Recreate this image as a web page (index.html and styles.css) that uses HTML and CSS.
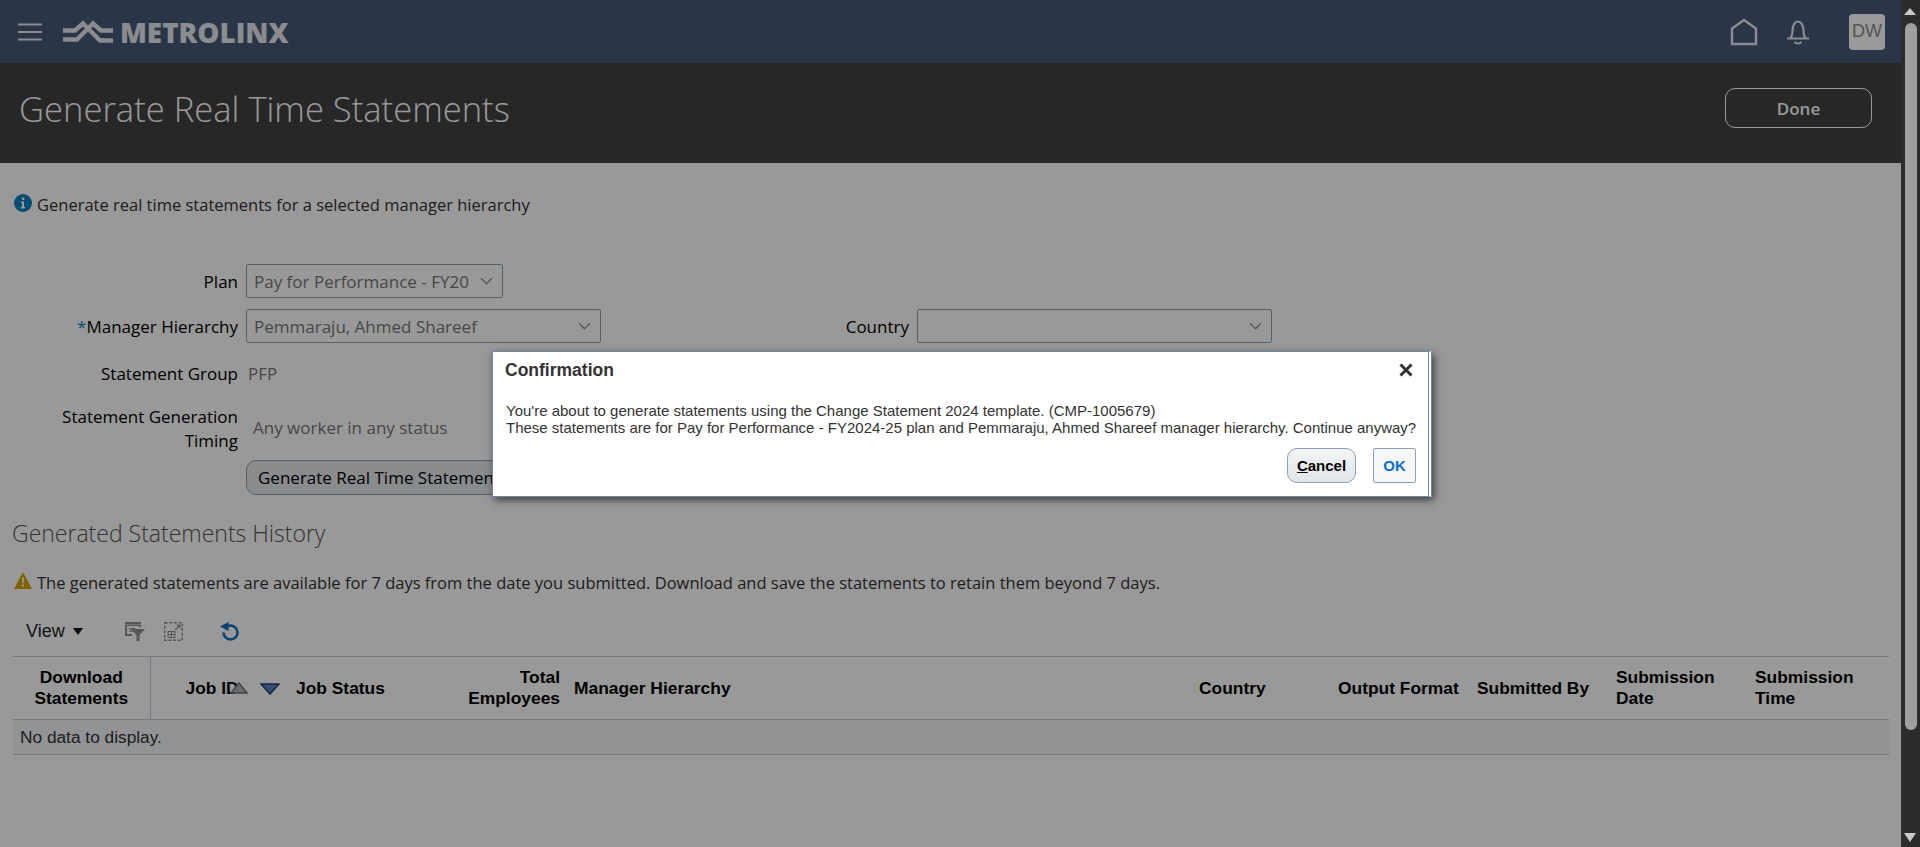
FILE: index.html
```html
<!DOCTYPE html>
<html lang="en">
<head>
  <meta charset="UTF-8">
  <title>Generate Real Time Statements</title>
  <link rel="stylesheet" href="styles.css">
</head>
<body>
  <div class="window">
    <div class="page">
      <div class="navbar">
        <svg class="menu-icon" width="24" height="18" viewBox="0 0 24 18"><path d="M0 1.5h24M0 9h24M0 16.5h24" stroke="#e6eaf0" stroke-width="2" fill="none"/></svg>
        <svg class="logo-mark" width="52" height="24" viewBox="0 0 52 24" fill="none" stroke="#e6eaf0" stroke-width="4.5"><path d="M1 10.5h12l8-7 17 17h13"/><path d="M1 19.5h14l16-16 8 7h12"/></svg>
        <span class="logo-text">METROLINX</span>
        <div class="nav-right">
          <svg width="28" height="28" viewBox="0 0 28 28" fill="none" stroke="#e6eaf0" stroke-width="2.4"><path d="M2 26V10.500L14 2l12 8.500V26z"/></svg>
          <svg class="bell" width="24" height="26" viewBox="0 0 24 26" fill="none" stroke="#e6eaf0" stroke-width="2.2"><path d="M1 19.500h22M4 19.500c2-2 2.500-4 2.500-8 0-5 2.500-9 5.500-9s5.500 4 5.500 9c0 4 .5 6 2.500 8M8.500 23c2 2 5 2 7 0"/></svg>
          <div class="avatar">DW</div>
        </div>
      </div>

      <div class="title-bar">
        <h1>Generate Real Time Statements</h1>
        <button class="done-btn">Done</button>
      </div>

      <div class="content">
        <div class="note">
          <svg width="18" height="18" viewBox="0 0 18 18"><circle cx="9" cy="9" r="9" fill="#0a7fc0"/><path d="M7 7.500h3v5.500h1.200v1.500H6.800V13H8V9H7zM8 3.500h2.200v2.400H8z" fill="#fff"/></svg>
          <span>Generate real time statements for a selected manager hierarchy</span>
        </div>

        <div class="form">
          <label class="field-label">Plan</label>
          <div class="select plan-select"><span>Pay for Performance - FY20</span><svg width="13" height="8" viewBox="0 0 12 7" fill="none" stroke="#8a97a3" stroke-width="1.300"><path d="M1 1l5 5 5-5"/></svg></div>
          <div></div>
          <div></div>

          <label class="field-label"><span class="required">*</span>Manager Hierarchy</label>
          <div class="select"><span>Pemmaraju, Ahmed Shareef</span><svg width="13" height="8" viewBox="0 0 12 7" fill="none" stroke="#8a97a3" stroke-width="1.300"><path d="M1 1l5 5 5-5"/></svg></div>
          <label class="field-label">Country</label>
          <div class="select"><span></span><svg width="13" height="8" viewBox="0 0 12 7" fill="none" stroke="#8a97a3" stroke-width="1.300"><path d="M1 1l5 5 5-5"/></svg></div>

          <label class="field-label group-row">Statement Group</label>
          <div class="field-value group-value group-row">PFP</div>
          <div></div>
          <div></div>

          <label class="field-label two-line">Statement Generation Timing</label>
          <div class="field-value timing-value">Any worker in any status</div>
          <div></div>
          <div></div>
        </div>
        <button class="generate-btn">Generate Real Time Statements</button>

        <h2>Generated Statements History</h2>

        <div class="note warning">
          <svg width="18" height="17" viewBox="0 0 18 17"><path d="M9 0l9 17H0z" fill="#d9a300"/><path d="M8 5.500h2l-.3 6H8.300zM8 12.500h2v2H8z" fill="#fff"/></svg>
          <span>The generated statements are available for 7 days from the date you submitted. Download and save the statements to retain them beyond 7 days.</span>
        </div>

        <div class="toolbar">
          <span class="view-menu">View</span>
          <span class="view-arrow"></span>
          <svg class="tool-filter" width="20" height="19" viewBox="0 0 20 19"><path d="M0 0h16v2.500H0zM0 3v11h7v-2H2V4h12v1h2V3zM4 6h6v1.300H4zM4 8.500h4v1.300H4z" fill="#8f8f8f"/><path d="M6 7h14l-5.500 6v6h-3v-6z" fill="#8f8f8f"/></svg>
          <svg class="tool-detach" width="19" height="19" viewBox="0 0 19 19" fill="none" stroke="#8f8f8f"><rect x=".7" y=".7" width="17.600" height="17.600" stroke-width="1.400" stroke-dasharray="3 1.600"/><path d="M4 9.500h7v6H4zM4 12.500h7M7.500 9.500v6" stroke-width="1"/><path d="M11 8l5-5M12.500 3H16v3.500" stroke-width="1.200"/></svg>
          <svg class="tool-refresh" width="20" height="19" viewBox="0 0 20 19" fill="none"><path d="M7 4.500c1-.6 2.200-1 3.500-1a7 7 0 1 1-7 7" stroke="#0a6fc0" stroke-width="2.600"/><path d="M8.500 0v9L0 4.500z" fill="#0a6fc0"/></svg>
        </div>

        <table class="history">
          <colgroup>
            <col class="c-download"><col class="c-small"><col class="c-small"><col class="c-small"><col class="c-manager"><col class="c-small"><col class="c-small"><col class="c-small"><col class="c-small"><col class="c-last">
          </colgroup>
          <thead>
            <tr>
              <th class="center divided">Download<br>Statements</th>
              <th class="job-id">Job ID
                <svg class="sort-up" width="18" height="12" viewBox="0 0 18 12"><path d="M9 1l8 10H1z" fill="#b5b5b5" stroke="#777" stroke-width="1.500"/></svg>
                <svg class="sort-down" width="20" height="12" viewBox="0 0 20 12"><path d="M1 1h18l-9 10z" fill="#5b7fc7" stroke="#2b3f66" stroke-width="1.500"/></svg>
              </th>
              <th>Job Status</th>
              <th class="right">Total<br>Employees</th>
              <th>Manager Hierarchy</th>
              <th>Country</th>
              <th>Output Format</th>
              <th>Submitted By</th>
              <th>Submission<br>Date</th>
              <th>Submission<br>Time</th>
            </tr>
          </thead>
          <tbody>
            <tr><td colspan="10">No data to display.</td></tr>
          </tbody>
        </table>
      </div>

      <div class="overlay"></div>

      <div class="dialog">
        <div class="dialog-head">
          <span class="dialog-title">Confirmation</span>
          <svg class="dialog-close" width="14" height="14" viewBox="0 0 14 14"><path d="M1.500 1.500l11 11M12.500 1.500l-11 11" stroke="#333" stroke-width="3" fill="none"/></svg>
        </div>
        <p class="dialog-text">You're about to generate statements using the Change Statement 2024 template. (CMP-1005679)<br>These statements are for Pay for Performance - FY2024-25 plan and Pemmaraju, Ahmed Shareef manager hierarchy. Continue anyway?</p>
        <div class="dialog-actions">
          <button class="cancel-btn"><u>C</u>ancel</button>
          <button class="ok-btn">OK</button>
        </div>
      </div>
    </div>

    <div class="scrollbar">
      <span class="scroll-up"></span>
      <div class="scroll-thumb"></div>
      <span class="scroll-down"></span>
    </div>
  </div>
</body>
</html>
```

FILE: styles.css
```css
* {
  box-sizing: border-box;
}
html, body {
  height: 100%;
}
body {
  margin: 0;
  font-family: "Open Sans", "Noto Sans", sans-serif;
  background: #fff;
  overflow: hidden;
}
.window {
  display: flex;
  height: 100vh;
}
.page {
  position: relative;
  flex: 1;
  min-width: 0;
  overflow: hidden;
}

/* top bar */
.navbar {
  display: flex;
  align-items: center;
  height: 63px;
  padding-left: 18px;
  background: #465a78;
}
.logo-mark {
  margin-left: 20px;
}
.logo-text {
  margin-left: 6px;
  font-size: 27.800px;
  font-weight: 800;
  color: #e6eaf0;
}
.nav-right {
  display: flex;
  align-items: center;
  margin-left: auto;
  padding-right: 16px;
}
.bell {
  margin-left: 28px;
}
.avatar {
  display: flex;
  align-items: center;
  justify-content: center;
  width: 36px;
  height: 36px;
  margin-left: 39px;
  border-radius: 4px;
  background: #fff;
  color: #8c8c8c;
  font-family: "Liberation Sans", sans-serif;
  font-size: 18px;
}

.title-bar {
  display: flex;
  align-items: center;
  justify-content: space-between;
  height: 100px;
  padding: 0 29px 10px 19px;
  background: #414141;
}
.title-bar h1 {
  margin: 0;
  font-size: 34.600px;
  font-weight: 300;
  color: #fff;
}
.done-btn {
  width: 147px;
  height: 40px;
  border: 1px solid #fff;
  border-radius: 10px;
  background: transparent;
  color: #fff;
  font-family: inherit;
  font-size: 17px;
  font-weight: 600;
}

/* page body */
.content {
  padding: 31px 12px 0 13px;
}
.note {
  display: flex;
  align-items: center;
  gap: 5px;
  height: 20px;
  padding-left: 1px;
  font-size: 16.500px;
  color: #333;
}
.note svg {
  margin-bottom: 3px;
}
.form {
  display: grid;
  grid-template-columns: 225px 355px 300px 355px;
  grid-template-rows: 34px 34px 40px 48px;
  column-gap: 8px;
  row-gap: 11px;
  margin-top: 50px;
}
.field-label {
  align-self: center;
  text-align: right;
  font-size: 17px;
  font-weight: 500;
  color: #000;
}
.two-line {
  line-height: 24px;
}
.group-row {
  padding-bottom: 2px;
}
.required {
  color: #0a7fc0;
}
.select {
  display: flex;
  align-items: center;
  justify-content: space-between;
  padding: 0 9px 0 7px;
  border: 1px solid #8fa0b0;
  border-radius: 2px;
  font-size: 17px;
  color: #777;
  white-space: nowrap;
}
.plan-select {
  width: 257px;
}
.field-value {
  align-self: center;
  font-size: 17px;
  color: #777;
}
.group-value {
  padding-left: 2px;
}
.timing-value {
  padding-left: 7px;
  padding-bottom: 3px;
}
.generate-btn {
  display: block;
  width: 300px;
  height: 35px;
  margin: 7px 0 0 233px;
  padding: 0 11px;
  border: 1px solid #8fa0b0;
  border-radius: 10px;
  background: #e4e8ec;
  font-family: inherit;
  font-size: 17px;
  font-weight: 500;
  color: #000;
  text-align: left;
  white-space: nowrap;
}
.content h2 {
  height: 32px;
  margin: 22px 0 0 -1px;
  font-size: 23px;
  font-weight: 300;
  line-height: 32px;
  color: #555;
}
.warning {
  height: 24px;
  margin-top: 21px;
}

/* table toolbar */
.toolbar {
  display: flex;
  align-items: center;
  height: 26px;
  margin-top: 24px;
  padding-left: 13px;
  font-family: "Liberation Sans", sans-serif;
}
.view-menu {
  font-size: 18px;
  color: #222;
}
.view-arrow {
  width: 0;
  height: 0;
  margin-left: 8px;
  border-left: 5px solid transparent;
  border-right: 5px solid transparent;
  border-top: 7px solid #111;
}
.tool-filter {
  margin-left: 42px;
}
.tool-detach {
  margin-left: 19px;
}
.tool-refresh {
  margin-left: 37px;
}

/* history table */
.history {
  width: 1876px;
  margin-top: 12px;
  border-collapse: collapse;
  table-layout: fixed;
  font-family: "Liberation Sans", sans-serif;
}
.c-download { width: 137px; }
.c-small { width: 139px; }
.c-manager { width: 625px; }
.c-last { width: 141px; }
.history th {
  height: 63px;
  padding: 0 7px;
  border-top: 1px solid #c0ccd8;
  border-bottom: 1px solid #c0ccd8;
  font-size: 17.400px;
  line-height: 21px;
  text-align: left;
  color: #000;
}
.history th.center {
  text-align: center;
}
.history th.right {
  text-align: right;
}
.history th.divided {
  border-right: 1px solid #c0ccd8;
}
.history th.job-id {
  position: relative;
  padding-left: 35px;
}
.sort-up {
  position: absolute;
  left: 79px;
  top: 25px;
}
.sort-down {
  position: absolute;
  left: 109px;
  top: 26px;
}
.history td {
  height: 35px;
  padding: 1px 7px 0;
  border-bottom: 1px solid #c0ccd8;
  background: #f3f5f8;
  font-size: 17.300px;
  color: #333;
}

.overlay {
  position: absolute;
  inset: 0;
  background: rgba(0, 0, 0, 0.4);
}

/* confirmation dialog */
.dialog {
  position: absolute;
  left: 492px;
  top: 351px;
  width: 940px;
  height: 146px;
  padding: 0 12px 0 13px;
  border: 1px solid #6f88a3;
  border-right: 4px double #6f88a3;
  background: #fff;
  box-shadow: 2px 3px 8px rgba(0, 0, 0, 0.6);
  font-family: "Liberation Sans", sans-serif;
}
.dialog-head {
  display: flex;
  align-items: center;
  justify-content: space-between;
  height: 34px;
  padding-top: 2px;
}
.dialog-title {
  margin-left: -1px;
  font-size: 17.500px;
  font-weight: 700;
  color: #333;
}
.dialog-close {
  margin-right: 3px;
}
.dialog-text {
  margin: 16px 0 0;
  font-size: 15px;
  line-height: 17px;
  color: #333;
  white-space: nowrap;
}
.dialog-actions {
  display: flex;
  justify-content: flex-end;
  gap: 17px;
  margin-top: 12px;
}
.cancel-btn {
  width: 69px;
  height: 35px;
  padding: 0;
  border: 1px solid #8fa0b0;
  border-radius: 10px;
  background: linear-gradient(#f2f4f6, #e2e6ea);
  font-family: inherit;
  font-size: 15px;
  font-weight: 700;
  color: #000;
}
.ok-btn {
  width: 43px;
  height: 35px;
  padding: 0;
  border: 1px solid #8fa0b0;
  border-radius: 2px;
  background: #f5f7f9;
  font-family: inherit;
  font-size: 15px;
  font-weight: 700;
  color: #0a6fd0;
}

/* browser scrollbar */
.scrollbar {
  position: relative;
  width: 19px;
  background: #2c2c2c;
}
.scroll-thumb {
  position: absolute;
  left: 4px;
  top: 23px;
  width: 12px;
  height: 707px;
  border-radius: 6px;
  background: #9f9f9f;
}
.scroll-up, .scroll-down {
  position: absolute;
  left: 3px;
  width: 0;
  height: 0;
  border-left: 6.500px solid transparent;
  border-right: 6.500px solid transparent;
}
.scroll-up {
  top: 8px;
  border-bottom: 7px solid #c8c8c8;
}
.scroll-down {
  bottom: 5px;
  border-top: 9px solid #c8c8c8;
}
```
